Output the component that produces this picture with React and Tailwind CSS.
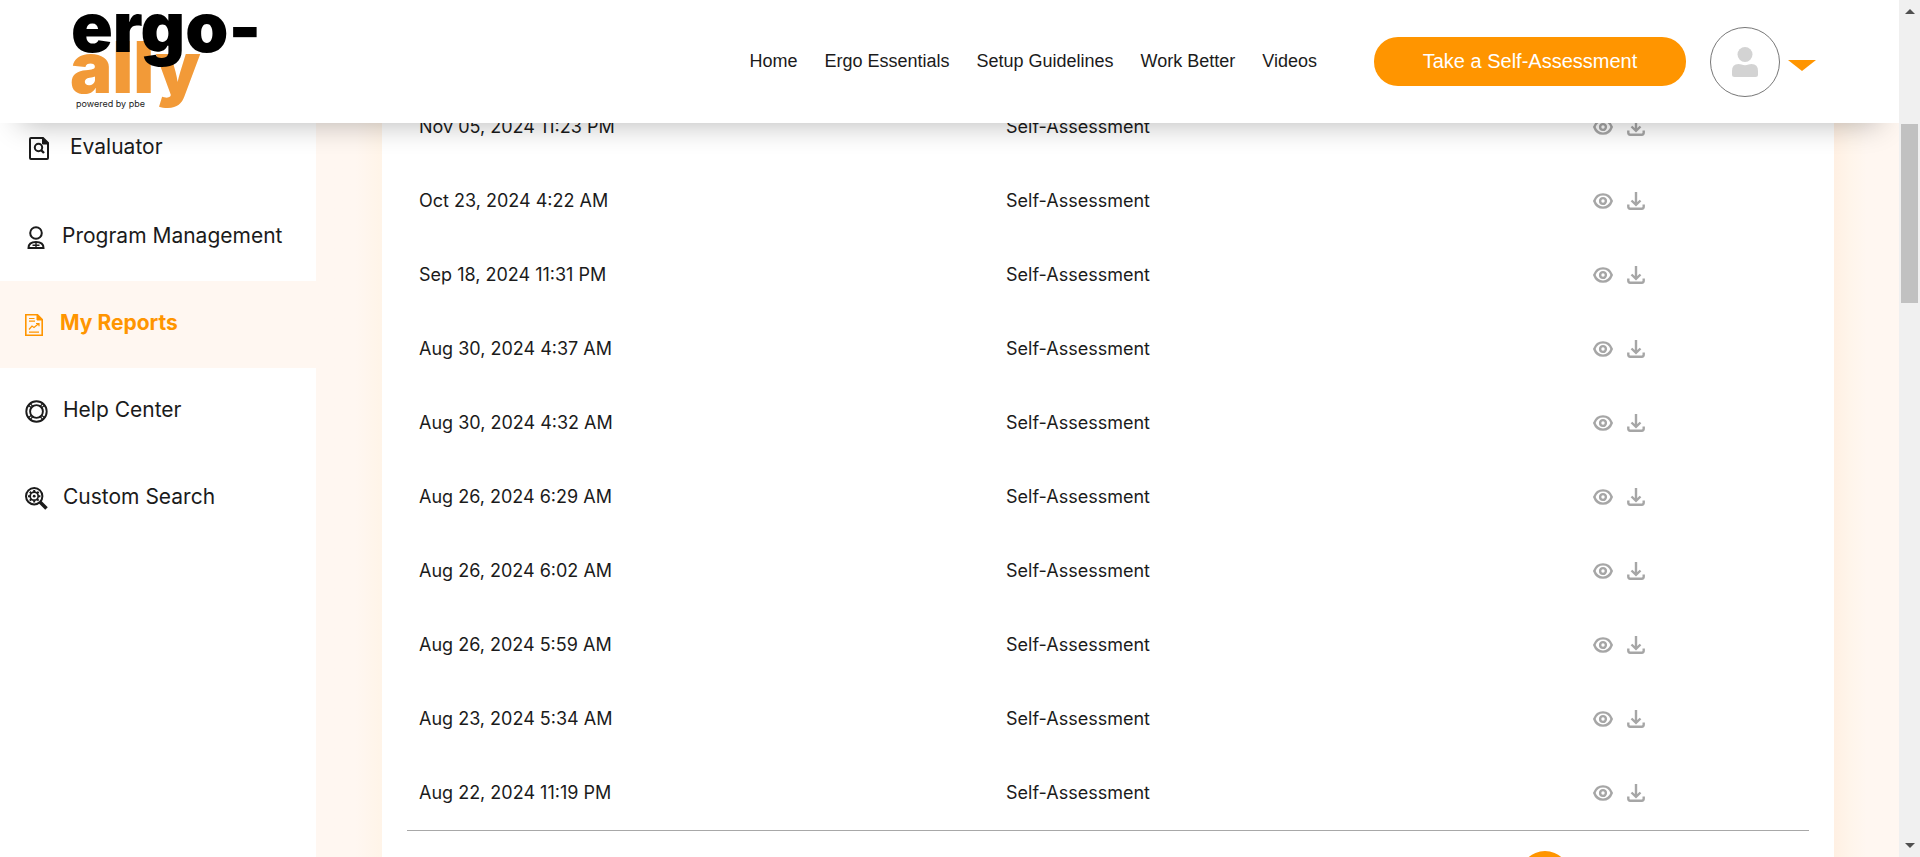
import React from "react";

const reports = [
  "Nov 05, 2024 11:23 PM",
  "Oct 23, 2024 4:22 AM",
  "Sep 18, 2024 11:31 PM",
  "Aug 30, 2024 4:37 AM",
  "Aug 30, 2024 4:32 AM",
  "Aug 26, 2024 6:29 AM",
  "Aug 26, 2024 6:02 AM",
  "Aug 26, 2024 5:59 AM",
  "Aug 23, 2024 5:34 AM",
  "Aug 22, 2024 11:19 PM",
];

const navLinks = ["Home", "Ergo Essentials", "Setup Guidelines", "Work Better", "Videos"];

function Logo() {
  return (
    <svg width="192" height="104" viewBox="0 0 192 104" className="block overflow-visible" role="img">
      <g fontFamily="Inter, sans-serif" fontWeight="900">
        <text x="-2" y="83" fontSize="71" fill="#f29a38">ally</text>
        <text x="-1" y="42" fontSize="69" fill="#000">ergo-</text>
      </g>
      <text x="4" y="97" fontSize="9" fill="#222" fontFamily="Inter, sans-serif">powered by pbe</text>
    </svg>
  );
}

function EvaluatorIcon() {
  return (
    <svg width="20" height="23" viewBox="0 0 20 23" fill="none" stroke="#1b1b1b">
      <path d="M1 2Q1 1 2 1H14L19 6V21Q19 22 18 22H2Q1 22 1 21Z" strokeWidth="2" />
      <path d="M13.5 1L19 7H13.5Z" fill="#1b1b1b" strokeWidth="1" />
      <circle cx="9.5" cy="10.5" r="3.7" strokeWidth="2" />
      <path d="M12 13L15 16" strokeWidth="2.4" />
    </svg>
  );
}

function ProgramIcon() {
  return (
    <svg width="18" height="23" viewBox="0 0 18 23" fill="none" stroke="#1b1b1b" strokeWidth="2">
      <circle cx="9" cy="7" r="5.8" />
      <path d="M1.5 22C1.5 18 4 16 9 16S16.500 18 16.500 22Z" />
      <path d="M9 16V22M5.500 19.200H12.500" strokeWidth="1.4" />
    </svg>
  );
}

function ReportIcon() {
  return (
    <svg width="18" height="22" viewBox="0 0 18 22" fill="none" stroke="#ff9500">
      <path d="M.8 .8H12.500L17.200 5.500V21.200H.8Z" strokeWidth="1.6" />
      <path d="M12 1V6H17Z" fill="#ff9500" strokeWidth="1" />
      <path d="M4 4.500H9.500M4 7.200H10M4 18.200H14" strokeWidth="1.2" />
      <path d="M4 15.500L7 12L9 13.500L13.500 9.800M11 9.500H14V12.200" strokeWidth="1.2" />
    </svg>
  );
}

function HelpIcon() {
  return (
    <svg width="23" height="23" viewBox="0 0 23 23" fill="none" stroke="#1b1b1b" strokeWidth="1.9">
      <circle cx="11.5" cy="11.5" r="10.2" />
      <circle cx="11.5" cy="11.5" r="6.4" />
      <path d="M3.800 5.500L6.500 8M5.500 3.800L8 6.500M17.500 3.800L15 6.500M19.200 5.500L16.500 8M3.800 17.500L6.500 15M5.500 19.200L8 16.500M17.500 19.200L15 16.500M19.200 17.500L16.500 15" strokeWidth="1.2" />
    </svg>
  );
}

function SearchGearIcon() {
  return (
    <svg width="23" height="23" viewBox="0 0 23 23" fill="none" stroke="#1b1b1b">
      <circle cx="9.200" cy="9.200" r="8.200" strokeWidth="2" />
      <circle cx="9.200" cy="9.200" r="4" strokeWidth="1.700" />
      <circle cx="9.200" cy="9.200" r="1.400" fill="#1b1b1b" stroke="none" />
      <path d="M9.200 3V5M9.200 13.400V15.400M3 9.200H5M13.400 9.200H15.400M4.800 4.800L6.200 6.200M12.200 12.200L13.600 13.600M4.800 13.600L6.200 12.200M12.200 6.200L13.600 4.800" strokeWidth="2" />
      <path d="M15 15L21.500 21.500" strokeWidth="3.600" />
    </svg>
  );
}

function EyeIcon() {
  return (
    <svg width="20" height="16" viewBox="0 0 20 16" fill="none" stroke="#a6a6a6" strokeWidth="2.4">
      <path d="M1.300 8C2.800 3.800 6 1.400 10 1.400S17.200 3.800 18.700 8C17.200 12.200 14 14.600 10 14.600S2.800 12.200 1.300 8Z" />
      <circle cx="10" cy="8" r="2.900" />
    </svg>
  );
}

function DownloadIcon() {
  return (
    <svg width="18" height="18" viewBox="0 0 18 18" fill="none" stroke="#a6a6a6" strokeWidth="2.4">
      <path d="M9 0V12.500M4.500 8.500L9 12.800L13.500 8.500" />
      <path d="M1.300 12.500V14.800Q1.300 16.700 3.200 16.700H14.800Q16.700 16.700 16.700 14.800V12.500" />
    </svg>
  );
}

const menu = [
  { label: "Evaluator", Icon: EvaluatorIcon, cls: "h-[92px] pl-[29px] gap-[21px]" },
  { label: "Program Management", Icon: ProgramIcon, cls: "h-[87px] pl-[27px] gap-[17px]" },
  { label: "My Reports", Icon: ReportIcon, cls: "h-[87px] pl-[25px] gap-[17px]", active: true },
  { label: "Help Center", Icon: HelpIcon, cls: "h-[87px] pl-[25px] gap-[15px]" },
  { label: "Custom Search", Icon: SearchGearIcon, cls: "h-[87px] pl-[25px] gap-[15px]" },
];

function Header() {
  return (
    <header className="relative z-10 flex h-[123px] shrink-0 items-center bg-white pl-[72px] pr-[83px] shadow-[0_20px_30px_-20px_rgba(0,0,0,0.3)]">
      <a href="#home" className="shrink-0">
        <Logo />
      </a>
      <nav className="ml-auto flex gap-[27px] whitespace-nowrap pb-px font-['Liberation_Sans',sans-serif] text-lg text-[#1b1b1b]">
        {navLinks.map((n) => (
          <a key={n} href="#nav">{n}</a>
        ))}
      </nav>
      <button className="ml-[57px] h-[49px] w-[312px] shrink-0 rounded-3xl bg-[#ff9500] pb-px font-['Liberation_Sans',sans-serif] text-xl text-white">
        Take a Self-Assessment
      </button>
      <button aria-label="Account" className="ml-6 flex shrink-0 items-center gap-2">
        <span className="flex size-[70px] items-center justify-center rounded-full border border-[#777]">
          <svg width="26" height="30" viewBox="0 0 26 30" fill="#d3d3d3">
            <circle cx="13" cy="7.500" r="7.500" />
            <path d="M0 24Q0 17 6.500 17Q8 17 9.500 17.600Q13 18.700 16.500 17.600Q18 17 19.500 17Q26 17 26 24V27.500Q26 30 23.500 30H2.500Q0 30 0 27.500Z" />
          </svg>
        </span>
        <svg width="28" height="11" viewBox="0 0 28 11" fill="#ff9500" className="mt-2">
          <path d="M0 0H28L14 11Z" />
        </svg>
      </button>
    </header>
  );
}

function Sidebar() {
  return (
    <aside className="w-[316px] shrink-0 bg-white">
      <nav>
        {menu.map(({ label, Icon, cls, active }) => (
          <a
            key={label}
            href="#menu"
            className={
              "flex items-center whitespace-nowrap text-[21px] " +
              cls +
              (active ? " bg-[#fff7f1] font-bold text-[#ff9500]" : " text-[#1b1b1b]")
            }
          >
            <Icon />
            <span className="pb-[3px]">{label}</span>
          </a>
        ))}
      </nav>
    </aside>
  );
}

function Reports() {
  return (
    <section className="flex min-w-0 flex-1 bg-[#fff7f1]">
      <div className="w-[66px] shrink-0 bg-linear-to-r from-[#fff7f1] from-60% to-[#fff4e8]" />
      <div className="min-w-0 flex-1 bg-white px-[25px]">
        <table className="w-full table-fixed border-b border-[#a8a8a8] text-lg text-[#1b1b1b]">
          <colgroup>
            <col className="w-[587px]" />
            <col className="w-[587px]" />
            <col />
          </colgroup>
          <tbody>
            {reports.map((date) => (
              <tr key={date} className="h-[74px]">
                <td className="px-3">{date}</td>
                <td className="px-3">Self-Assessment</td>
                <td className="px-3">
                  <div className="flex items-center gap-[14px]">
                    <button aria-label="View report"><EyeIcon /></button>
                    <button aria-label="Download report"><DownloadIcon /></button>
                  </div>
                </td>
              </tr>
            ))}
          </tbody>
        </table>
        <div className="mt-5 flex justify-end pr-[239px]">
          <button aria-label="Current page" className="size-[50px] rounded-full bg-[#ff9500]" />
        </div>
      </div>
      <div className="w-[65px] shrink-0 bg-linear-to-r from-[#fff0e3] via-[#fff5eb] via-25% to-[#fff7f1] to-50%" />
    </section>
  );
}

function ScrollTrack() {
  return (
    <div aria-hidden="true" className="flex w-[21px] shrink-0 flex-col items-center bg-[#f0f0f0] py-[9px]">
      <svg width="10" height="5" viewBox="0 0 10 5" fill="#505050"><path d="M0 5L5 0L10 5Z" /></svg>
      <div className="mt-[110px] h-[179px] w-[17px] bg-[#c1c1c1]" />
      <svg width="10" height="5" viewBox="0 0 10 5" fill="#505050" className="mt-auto"><path d="M0 0L5 5L10 0Z" /></svg>
    </div>
  );
}

export default function App() {
  return (
    <div className="flex h-screen overflow-hidden bg-white font-['Inter',sans-serif]">
      <div className="flex min-w-0 flex-1 flex-col overflow-hidden">
        <Header />
        <main className="-mt-[33px] flex flex-1">
          <div className="flex min-w-0 flex-1">
            <div className="flex bg-white pt-3">
              <Sidebar />
            </div>
            <Reports />
          </div>
        </main>
      </div>
      <ScrollTrack />
    </div>
  );
}
